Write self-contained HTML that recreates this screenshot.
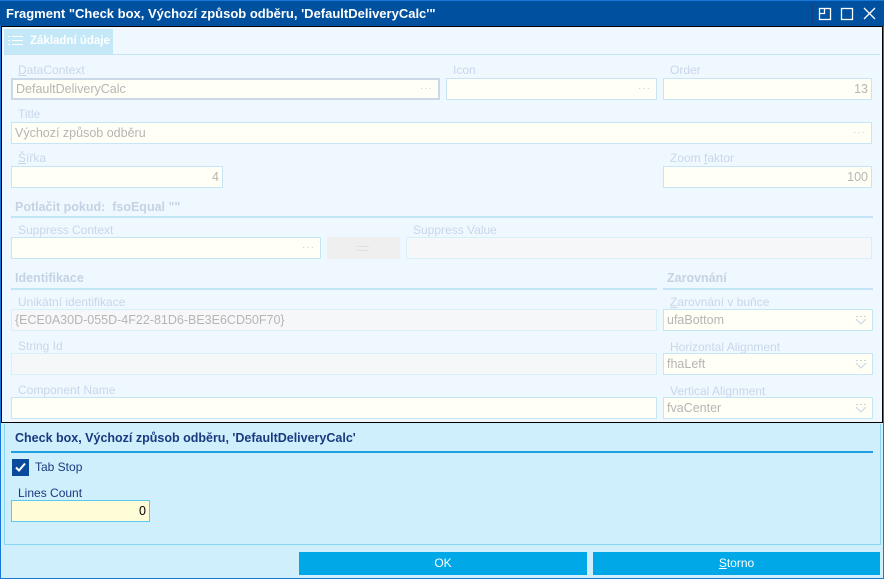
<!DOCTYPE html>
<html><head><meta charset="utf-8"><style>
*{box-sizing:border-box;margin:0;padding:0}
body{width:884px;height:579px;overflow:hidden;background:#d0effc;font-family:"Liberation Sans",sans-serif;font-size:12px;position:relative}
.a{position:absolute}
.lbl{position:absolute;color:#c8d6ea;font-size:12px;line-height:14px;white-space:nowrap}
.in{position:absolute;height:22px;background:#fffff6;border:1px solid #c4e6f6;color:#b8b4b4;font-size:12.5px;line-height:20px;padding:0 3px;white-space:nowrap}
.g{background:#f6f7f8;border-color:#d8eef8}
.r{text-align:right}
.dots{position:absolute;right:5px;top:0;color:#c8ccd8;font-size:10px;letter-spacing:1px}
.hdr{position:absolute;color:#c4d2e4;font-weight:bold;font-size:12.5px;white-space:nowrap}
.line{position:absolute;height:2px;background:#c2e6f6}
.cb{position:absolute;right:5px;top:5px;width:12px;height:10px}
</style></head><body>
<div class="a" style="left:0;top:0;width:884px;height:579px;border:1px solid #1a78d8;border-top:none"></div>
<div class="a" style="left:0;top:0;width:884px;height:26px;background:#0050a0;color:#fff;font-weight:bold;font-size:13px;line-height:26px;padding-left:6px;border-top:1px solid #1a78d8;white-space:nowrap">Fragment "Check box, Výchozí způsob odběru, 'DefaultDeliveryCalc'"</div>
<div class="a" style="left:812px;top:3px;width:1px;height:20px;background:#1a3f78"></div>
<svg class="a" style="left:818px;top:6px" width="64" height="16" viewBox="0 0 64 16" fill="none" stroke="#fff" stroke-width="1.3">
<rect x="1.5" y="2.5" width="11" height="11"/><path d="M1.5 7.5h5v-5"/>
<rect x="23.5" y="2.5" width="11" height="11"/>
<path d="M46 2l11 11M57 2L46 13"/></svg>
<div class="a" style="left:1px;top:26px;width:882px;height:397px;background:#f0f8ff;border:1px solid #000"></div>
<div class="a" style="left:4px;top:29px;width:109px;height:25px;background:#c4e8f8;color:#fff;font-weight:bold;font-size:11.5px;line-height:25px;padding-left:26px;white-space:nowrap">Základní údaje</div>
<svg class="a" style="left:8px;top:35px" width="16" height="12" stroke="#fff" stroke-width="1"><path d="M0 1.5h2M4 1.5h11M0 5.5h2M4 5.5h11M0 9.5h2M4 9.5h11"/></svg>
<div class="line" style="left:4px;top:54px;width:876px;height:1px"></div>

<div class="lbl" style="left:18px;top:63px"><u>D</u>ataContext</div>
<div class="in" style="left:11px;top:78px;width:429px;border:2px solid #cad8e8;line-height:18px">DefaultDeliveryCalc<span class="dots">···</span></div>
<div class="lbl" style="left:453px;top:63px">Icon</div>
<div class="in" style="left:446px;top:78px;width:211px"><span class="dots">···</span></div>
<div class="lbl" style="left:670px;top:63px">Order</div>
<div class="in r" style="left:663px;top:78px;width:209px">13</div>

<div class="lbl" style="left:18px;top:107px">Title</div>
<div class="in" style="left:11px;top:122px;width:861px">Výchozí způsob odběru<span class="dots">···</span></div>

<div class="lbl" style="left:18px;top:151px"><u>Š</u>ířka</div>
<div class="in r" style="left:11px;top:166px;width:212px">4</div>
<div class="lbl" style="left:670px;top:151px">Zoom <u>f</u>aktor</div>
<div class="in r" style="left:663px;top:166px;width:209px">100</div>

<div class="hdr" style="left:15px;top:200px">Potlačit pokud:&nbsp; fsoEqual ""</div>
<div class="line" style="left:11px;top:216px;width:862px"></div>
<div class="lbl" style="left:18px;top:223px">Suppress Context</div>
<div class="in" style="left:11px;top:237px;width:310px"><span class="dots">···</span></div>
<div class="a" style="left:327px;top:237px;width:73px;height:22px;background:#efefef"><div class="a" style="left:30px;top:9px;width:12px;height:1px;background:#e0e0e0"></div><div class="a" style="left:30px;top:13px;width:12px;height:1px;background:#e0e0e0"></div></div>
<div class="lbl" style="left:413px;top:223px">Suppress Value</div>
<div class="in g" style="left:406px;top:237px;width:466px"></div>

<div class="hdr" style="left:15px;top:271px">Identifikace</div>
<div class="line" style="left:11px;top:288px;width:646px"></div>
<div class="hdr" style="left:667px;top:271px">Zarovnání</div>
<div class="line" style="left:663px;top:288px;width:210px"></div>

<div class="lbl" style="left:18px;top:295px">Unikátní identifikace</div>
<div class="in g" style="left:11px;top:309px;width:646px">{ECE0A30D-055D-4F22-81D6-BE3E6CD50F70}</div>
<div class="lbl" style="left:18px;top:339px">String Id</div>
<div class="in g" style="left:11px;top:353px;width:646px"></div>
<div class="lbl" style="left:18px;top:383px">Component Name</div>
<div class="in" style="left:11px;top:397px;width:646px"></div>

<div class="lbl" style="left:670px;top:295px"><u>Z</u>arovnání v buňce</div>
<div class="in" style="left:663px;top:309px;width:210px">ufaBottom<svg class="cb" viewBox="0 0 12 10" fill="none" stroke="#c8d4e4"><path d="M1 1.5h2M5 1.5h2M9 1.5h2M1 4l5 5 5-5"/></svg></div>
<div class="lbl" style="left:670px;top:340px">Horizontal Alignment</div>
<div class="in" style="left:663px;top:353px;width:210px">fhaLeft<svg class="cb" viewBox="0 0 12 10" fill="none" stroke="#c8d4e4"><path d="M1 1.5h2M5 1.5h2M9 1.5h2M1 4l5 5 5-5"/></svg></div>
<div class="lbl" style="left:670px;top:384px">Vertical Alignment</div>
<div class="in" style="left:663px;top:397px;width:210px">fvaCenter<svg class="cb" viewBox="0 0 12 10" fill="none" stroke="#c8d4e4"><path d="M1 1.5h2M5 1.5h2M9 1.5h2M1 4l5 5 5-5"/></svg></div>

<div class="a" style="left:4px;top:424px;width:877px;height:121px;border:1px solid #8ad4f4;border-top:none"></div>
<div class="a" style="left:15px;top:431px;color:#1a3a80;font-weight:bold;font-size:12.5px;white-space:nowrap">Check box, Výchozí způsob odběru, 'DefaultDeliveryCalc'</div>
<div class="a" style="left:11px;top:451px;width:862px;height:2px;background:#1ea0e0"></div>
<div class="a" style="left:12px;top:459px;width:17px;height:17px;background:#0a4a9c"></div>
<svg class="a" style="left:14px;top:461px" width="13" height="13" fill="none" stroke="#fff" stroke-width="2"><path d="M2 6.5l3 3 6-7"/></svg>
<div class="a" style="left:35px;top:460px;color:#1a3a80">Tab Stop</div>
<div class="a" style="left:18px;top:486px;color:#1a3a80">Lines Count</div>
<div class="in r" style="left:11px;top:500px;width:139px;background:#fffcd8;border-color:#5ac8f0;color:#000">0</div>

<div class="a" style="left:299px;top:552px;width:288px;height:23px;background:#00a8e8;color:#fff;text-align:center;line-height:23px">OK</div>
<div class="a" style="left:593px;top:552px;width:287px;height:23px;background:#00a8e8;color:#fff;text-align:center;line-height:23px"><u>S</u>torno</div>
</body></html>
